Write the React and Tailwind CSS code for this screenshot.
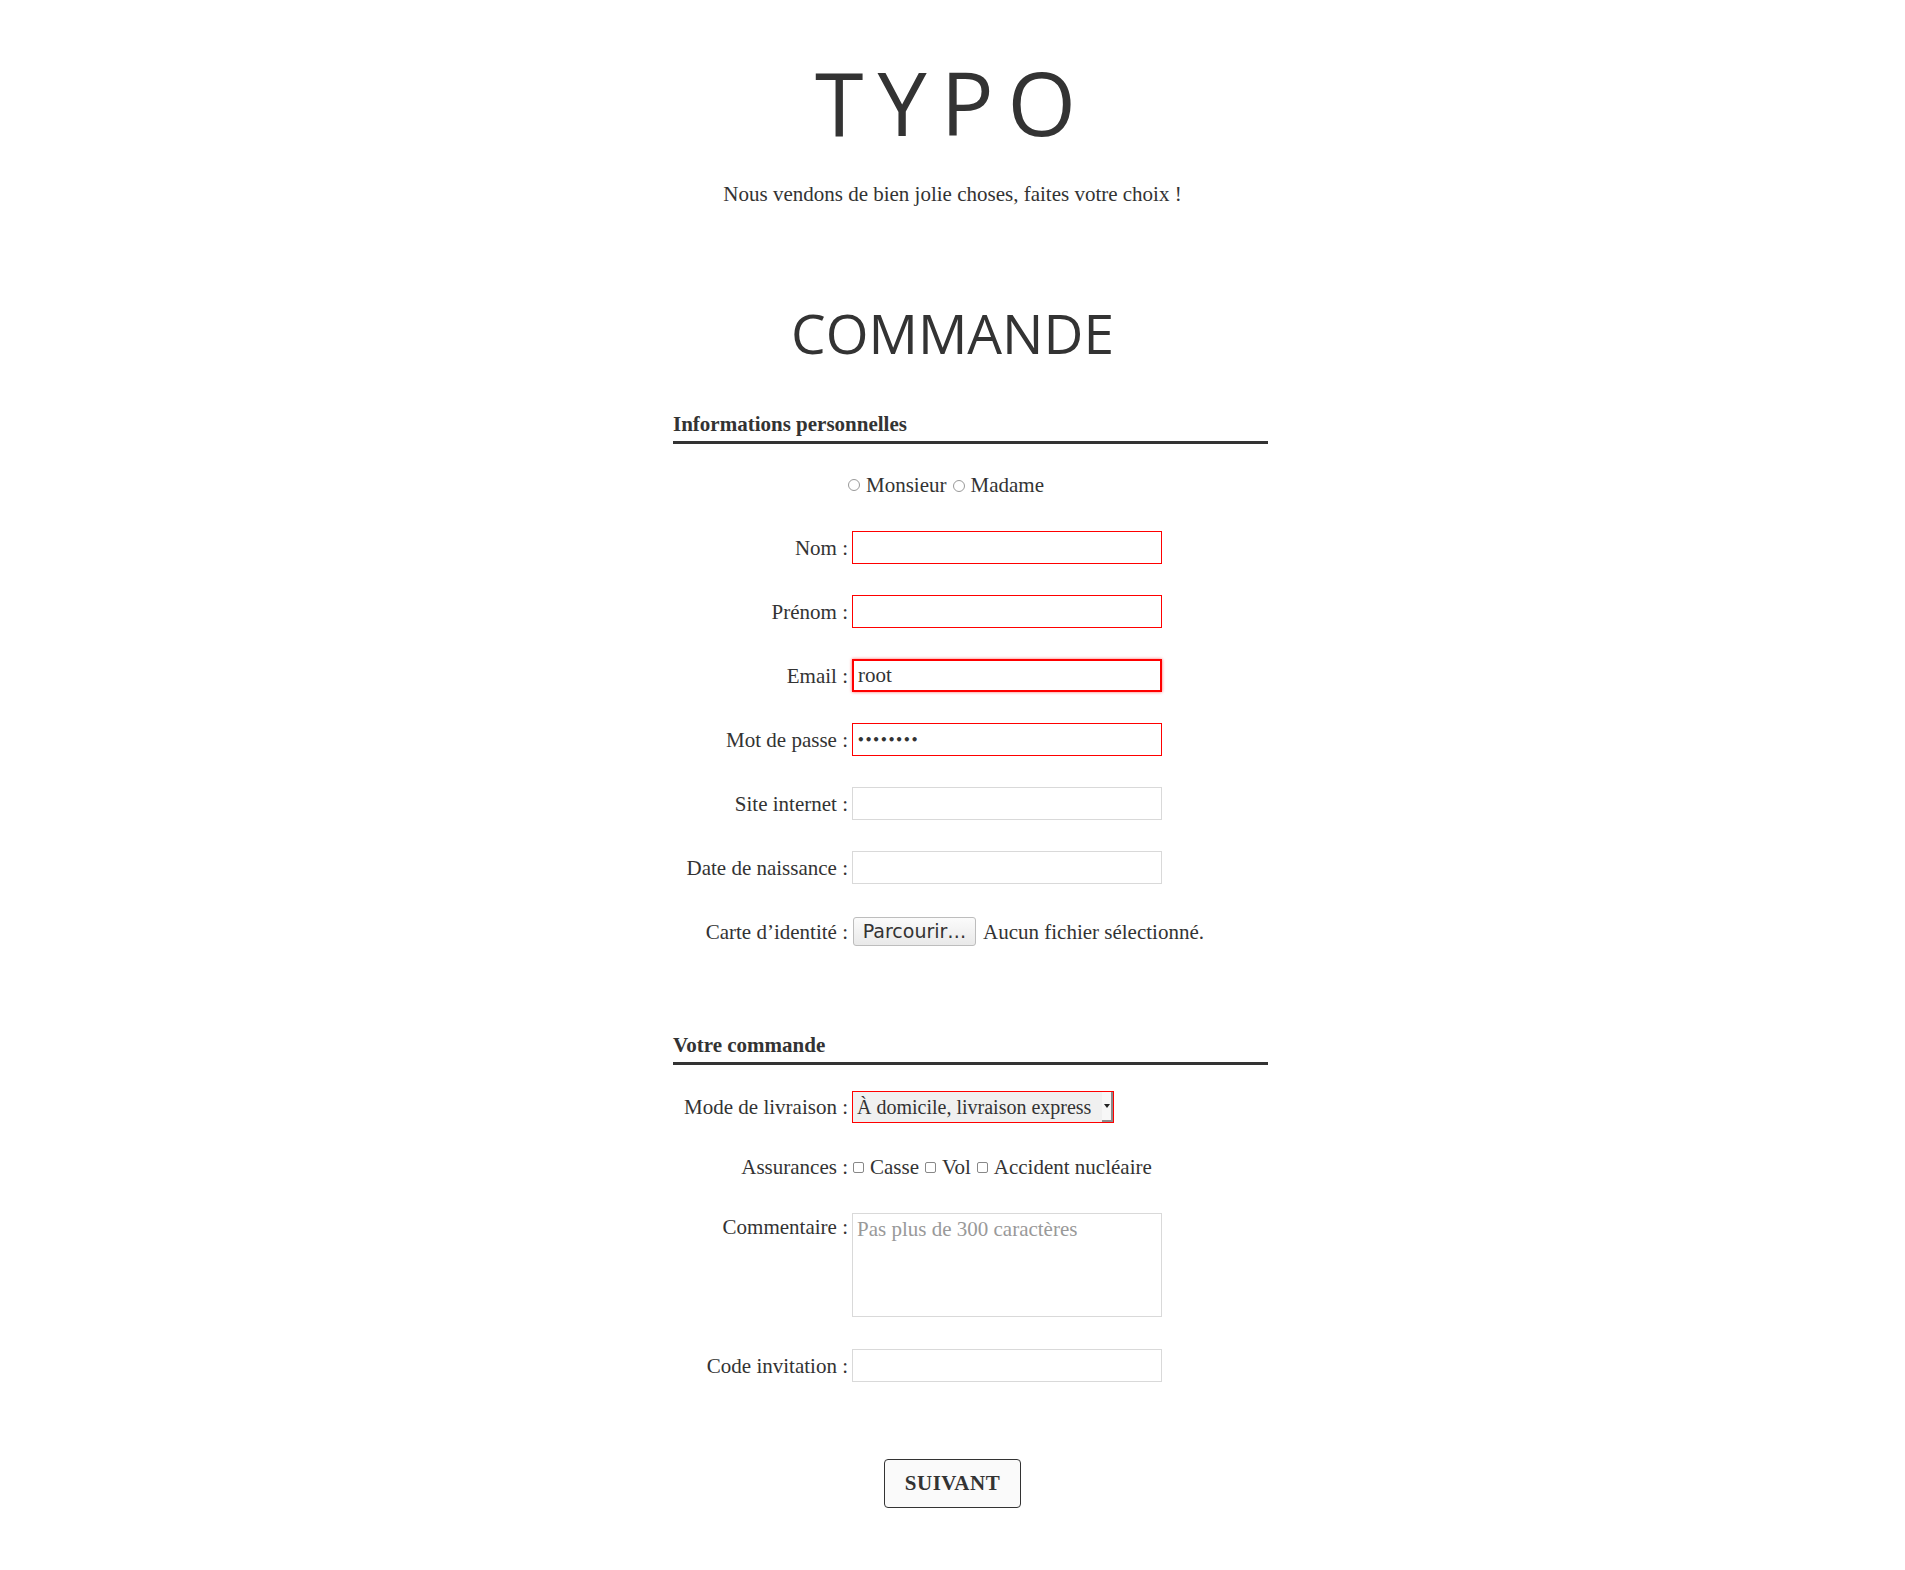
import React from "react";

const serif = { fontFamily: '"Liberation Serif", "Times New Roman", serif' };

function Row({ label, children, alignTop = false }) {
  return (
    <div className={`grid grid-cols-[175px_1fr] gap-x-[4px] ${alignTop ? "items-start" : "items-center"}`}>
      <div className="text-right text-[21px] leading-[28px] text-[#333]">{label}</div>
      <div className="flex items-center">{children}</div>
    </div>
  );
}

function TextBox({ red = false, focus = false, children }) {
  return (
    <div
      className={`flex h-[33px] w-[310px] items-center bg-white px-[4px] text-[21px] text-[#333] ${
        focus ? "border-2 border-[#ff0000]" : red ? "border border-[#ff0000]" : "border border-[#d9d9d9]"
      } ${focus ? "shadow-[0_0_3px_0px_rgba(255,0,0,0.6)]" : ""}`}
    >
      {children}
    </div>
  );
}

function SectionTitle({ children }) {
  return (
    <div className="border-b-[3px] border-[#333] pb-[3px] text-[21px] font-bold leading-[28px] text-[#333]">
      {children}
    </div>
  );
}

function Radio() {
  return <span className="inline-block h-[12px] w-[12px] rounded-full border border-[#999] bg-white" />;
}

function Check() {
  return <span className="inline-block h-[11px] w-[11px] rounded-[2px] border border-[#888] bg-white" />;
}

export default function App() {
  return (
    <div className="min-h-[1570px] w-full bg-white text-[#333]" style={serif}>
      <div className="flex flex-col items-center">
        <h1
          className="mt-[58px] text-[88px] font-normal leading-none tracking-[14px] text-[#333]"
          style={{ fontFamily: '"Open Sans", sans-serif' }}
        >
          TYPO
        </h1>
        <p className="mt-[34px] text-[21px] leading-[28px] text-[#333]">
          Nous vendons de bien jolie choses, faites votre choix !
        </p>
        <h2
          className="mt-[97px] text-[55px] font-normal leading-none tracking-[0px] text-[#333]"
          style={{ fontFamily: '"Open Sans", sans-serif' }}
        >
          COMMANDE
        </h2>
      </div>

      <div className="mx-auto w-[631px] pl-[36px]">
        <div className="mt-[50px]">
          <SectionTitle>Informations personnelles</SectionTitle>
        </div>

        <div className="mt-[27px] flex h-[28px] items-center pl-[175px] text-[21px] leading-[28px]">
          <Radio />
          <span className="ml-[6px]">Monsieur</span>
          <span className="ml-[6px]"><Radio /></span>
          <span className="ml-[6px]">Madame</span>
        </div>

        <div className="mt-[32px] flex flex-col gap-[31px]">
          <Row label="Nom :">
            <TextBox red />
          </Row>
          <Row label="Prénom :">
            <TextBox red />
          </Row>
          <Row label="Email :">
            <TextBox red focus>
              root
            </TextBox>
          </Row>
          <Row label="Mot de passe :">
            <TextBox red>
              <span
                className="text-[12px] font-bold text-[#333]"
                style={{ fontFamily: '"DejaVu Sans", sans-serif' }}
              >
                ••••••••
              </span>
            </TextBox>
          </Row>
          <Row label="Site internet :">
            <TextBox />
          </Row>
          <Row label="Date de naissance :">
            <TextBox />
          </Row>
          <Row label="Carte d’identité :">
            <div className="flex h-[33px] items-center">
              <button
                className="ml-[1px] h-[29px] w-[123px] rounded-[3px] border border-[#bdbdbd] bg-gradient-to-b from-[#fbfbfb] to-[#e9e9e9] text-[19px] leading-none text-[#333]"
                style={{ fontFamily: '"DejaVu Sans", sans-serif' }}
              >
                Parcourir…
              </button>
              <span className="ml-[7px] text-[21px] leading-[28px]">Aucun fichier sélectionné.</span>
            </div>
          </Row>
        </div>

        <div className="mt-[83px]">
          <SectionTitle>Votre commande</SectionTitle>
        </div>

        <div className="mt-[26px] flex flex-col">
          <Row label="Mode de livraison :">
            <div className="flex h-[32px] w-[262px] items-stretch border border-[#ff0000] bg-[#f0f0f0]">
              <span className="flex-1 overflow-hidden whitespace-nowrap pl-[4px] text-[20px] leading-[30px] text-[#333]">
                À domicile, livraison express
              </span>
              <span className="flex w-[11px] shrink-0 items-center justify-center border-r-2 border-b-2 border-[#8a8a8a] bg-[#f7f7f7]">
                <svg width="6" height="4" viewBox="0 0 6 4">
                  <path d="M0 0 L6 0 L3 4 Z" fill="#222" />
                </svg>
              </span>
            </div>
          </Row>

          <div className="mt-[30px]">
            <Row label="Assurances :">
              <div className="flex h-[28px] items-center text-[21px] leading-[28px]">
                <span className="ml-[1px] flex"><Check /></span>
                <span className="ml-[6px]">Casse</span>
                <span className="ml-[6px] flex"><Check /></span>
                <span className="ml-[6px]">Vol</span>
                <span className="ml-[6px] flex"><Check /></span>
                <span className="ml-[6px]">Accident nucléaire</span>
              </div>
            </Row>
          </div>

          <div className="mt-[32px]">
            <Row label="Commentaire :" alignTop>
              <div className="h-[104px] w-[310px] border border-[#d9d9d9] bg-white px-[4px] pt-[1px] text-[21px] leading-[28px] text-[#999]">
                Pas plus de 300 caractères
              </div>
            </Row>
          </div>

          <div className="mt-[32px]">
            <Row label="Code invitation :">
              <TextBox />
            </Row>
          </div>
        </div>
      </div>

      <div className="mt-[77px] flex justify-center pb-[60px]">
        <button className="h-[49px] w-[137px] rounded-[4px] border border-[#333] bg-[#fafafa] text-[21px] font-bold tracking-[0.5px] text-[#333]">
          SUIVANT
        </button>
      </div>
    </div>
  );
}
